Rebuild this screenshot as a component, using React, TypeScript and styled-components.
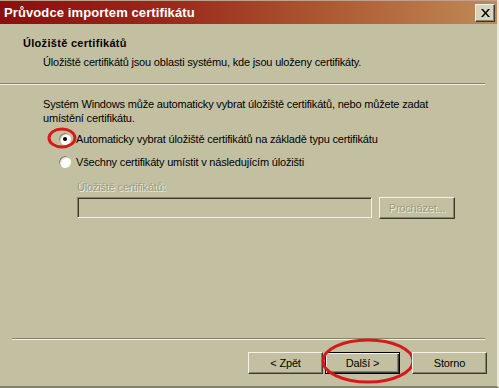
import styled, { createGlobalStyle } from "styled-components";

const GlobalStyle = createGlobalStyle`
  html, body {
    margin: 0;
    padding: 0;
    background: #c3c0a2;
  }
  body {
    font-family: "Liberation Sans", Tahoma, sans-serif;
    font-size: 11px;
    letter-spacing: -0.18px;
    color: #000;
  }
`;

const bg = "#c3c0a2";
const shadow = "#85836c";
const darkShadow = "#3a3a30";

export default function App() {
  return (
    <Window>
      <GlobalStyle />
      <TitleBar>
        <Title>Průvodce importem certifikátu</Title>
        <CloseButton>
          <svg width="9" height="8" viewBox="0 0 9 8">
            <path d="M0 0h2l2.5 3 2.5-3h2L5.5 4 9 8H7L4.5 5 2 8H0l3.5-4z" fill="#000" />
          </svg>
        </CloseButton>
      </TitleBar>

      <Header>
        <HeaderTitle>Úložiště certifikátů</HeaderTitle>
        <HeaderText>
          Úložiště certifikátů jsou oblasti systému, kde jsou uloženy certifikáty.
        </HeaderText>
      </Header>
      <Separator $inset={0} />

      <Body>
        <Paragraph>
          Systém Windows může automaticky vybrat úložiště certifikátů, nebo můžete zadat
          <br />
          umístění certifikátu.
        </Paragraph>
        <RadioRow $top={6}>
          <Radio $checked>
            <Mark $w={30} $h={22} style={{ left: -12, top: -6 }} />
          </Radio>
          <RadioLabel>Automaticky vybrat úložiště certifikátů na základě typu certifikátu</RadioLabel>
        </RadioRow>
        <RadioRow $top={7}>
          <Radio />
          <RadioLabel>Všechny certifikáty umístit v následujícím úložišti</RadioLabel>
        </RadioRow>
        <StoreBlock>
          <DisabledLabel>Úložiště certifikátů:</DisabledLabel>
          <StoreRow>
            <StoreInput />
            <Button $disabled $width={76}>Procházet...</Button>
          </StoreRow>
        </StoreBlock>
      </Body>

      <Separator $inset={12} />
      <Footer>
        <Button>&lt; Zpět</Button>
        <Button $default>
          Další &gt;
          <Mark $w={94} $h={46} style={{ left: -5, top: -15 }} />
        </Button>
        <Button $gap={10}>Storno</Button>
      </Footer>
    </Window>
  );
}

function Mark({ $w, $h, style }: { $w: number; $h: number; style?: React.CSSProperties }) {
  return (
    <MarkSvg width={$w} height={$h} viewBox={`0 0 ${$w} ${$h}`} style={style}>
      <ellipse
        cx={$w / 2}
        cy={$h / 2}
        rx={$w / 2 - 2}
        ry={$h / 2 - 2}
        fill="none"
        stroke="#d61a1a"
        strokeWidth="3"
      />
    </MarkSvg>
  );
}

const Window = styled.div`
  position: relative;
  width: 499px;
  height: 388px;
  box-sizing: border-box;
  display: flex;
  flex-direction: column;
  background: ${bg};
  border-right: 2px solid #ece9d8;
  border-bottom: 2px solid ${shadow};
  overflow: hidden;
`;

const TitleBar = styled.div`
  height: 24px;
  flex: none;
  display: flex;
  align-items: center;
  justify-content: space-between;
  padding: 0 2px 0 4px;
  background: linear-gradient(90deg, #8a0e0e 0%, #9a2a1c 35%, #ac5832 65%, #c08a58 100%);
  border-top: 1px solid #c0a090;
  box-sizing: border-box;
`;

const Title = styled.div`
  color: #fff;
  font-weight: bold;
  font-size: 13px;
  letter-spacing: 0.1px;
`;

const CloseButton = styled.div`
  width: 20px;
  height: 18px;
  box-sizing: border-box;
  display: flex;
  align-items: center;
  justify-content: center;
  background: #d6d3be;
  border: 1px solid;
  border-color: #f4f2e4 ${darkShadow} ${darkShadow} #f4f2e4;
  box-shadow: inset -1px -1px 0 ${shadow};
`;

const Header = styled.div`
  padding: 12px 0 14px 23px;
  display: flex;
  flex-direction: column;
  gap: 5px;
`;

const HeaderTitle = styled.div`
  font-weight: bold;
  line-height: 14px;
  letter-spacing: 0.3px;
`;

const HeaderText = styled.div`
  padding-left: 20px;
  line-height: 14px;
`;

const Separator = styled.div<{ $inset: number }>`
  flex: none;
  height: 0;
  margin: 0 ${(p) => (p.$inset ? p.$inset : 12)}px 0 ${(p) => p.$inset}px;
  border-top: 1px solid ${shadow};
  border-bottom: 1px solid #f2f0e0;
`;

const Body = styled.div`
  flex: 1;
  padding: 12px 0 0 43px;
  display: flex;
  flex-direction: column;
`;

const Paragraph = styled.div`
  line-height: 14px;
`;

const RadioRow = styled.div<{ $top: number }>`
  margin-top: ${(p) => p.$top}px;
  margin-left: 16px;
  height: 16px;
  display: flex;
  align-items: center;
  gap: 5px;
`;

const Radio = styled.span<{ $checked?: boolean }>`
  position: relative;
  width: 12px;
  height: 12px;
  flex: none;
  border-radius: 50%;
  background: #fff;
  box-shadow: inset 1px 1px 0 ${shadow}, inset 2px 2px 0 #e6e4d6;

  &::after {
    content: "";
    display: ${(p) => (p.$checked ? "block" : "none")};
    position: absolute;
    left: 4px;
    top: 4px;
    width: 4px;
    height: 4px;
    border-radius: 50%;
    background: #000;
  }
`;

const RadioLabel = styled.span`
  line-height: 14px;
`;

const StoreBlock = styled.div`
  margin: 10px 0 0 34px;
  display: flex;
  flex-direction: column;
  gap: 3px;
`;

const DisabledLabel = styled.div`
  line-height: 14px;
  color: #9c9a82;
  text-shadow: 1px 1px 0 #eeecdc;
`;

const StoreRow = styled.div`
  display: flex;
  align-items: flex-start;
  gap: 7px;
`;

const StoreInput = styled.div`
  width: 295px;
  height: 21px;
  box-sizing: border-box;
  background: ${bg};
  border: 1px solid;
  border-color: ${shadow} #f4f2e4 #f4f2e4 ${shadow};
  box-shadow: inset 1px 1px 0 ${darkShadow};
`;

const Button = styled.div<{ $disabled?: boolean; $default?: boolean; $width?: number; $gap?: number }>`
  position: relative;
  width: ${(p) => p.$width ?? 75}px;
  height: 22px;
  margin-left: ${(p) => p.$gap ?? 0}px;
  box-sizing: border-box;
  display: flex;
  align-items: center;
  justify-content: center;
  background: ${bg};
  color: ${(p) => (p.$disabled ? "#9c9a82" : "#000")};
  text-shadow: ${(p) => (p.$disabled ? "1px 1px 0 #eeecdc" : "none")};
  border: 1px solid;
  border-color: ${(p) => (p.$default ? "#000" : `#f4f2e4 ${darkShadow} ${darkShadow} #f4f2e4`)};
  box-shadow: ${(p) =>
    p.$default
      ? `inset 1px 1px 0 #f4f2e4, inset -1px -1px 0 ${darkShadow}, inset -2px -2px 0 ${shadow}`
      : `inset -1px -1px 0 ${shadow}`};
`;

const Footer = styled.div`
  flex: none;
  height: 46px;
  box-sizing: border-box;
  padding: 12px 10px 0 0;
  display: flex;
  justify-content: flex-end;
  align-items: flex-start;
  gap: 2px;
`;

const MarkSvg = styled.svg`
  position: absolute;
  pointer-events: none;
  overflow: visible;
`;
